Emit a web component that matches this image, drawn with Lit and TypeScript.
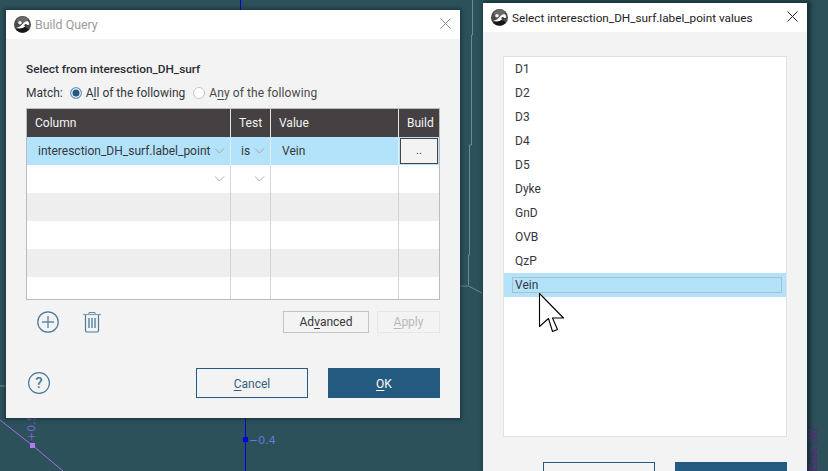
import { LitElement, html, css, svg } from "lit";
import { customElement } from "lit/decorators.js";

const logo = svg`<svg class="logo" width="17" height="17" viewBox="0 0 17 17"><circle cx="8.500" cy="8.500" r="8.500" fill="#4a4a4a"/><path d="M2.500 4A8.500 8.500 0 0 1 14.500 2.500L13 6L4 8z" fill="#6a6a6a"/><path d="M2 13.500A8.500 8.500 0 0 0 15 13.500L11 11L5 12z" fill="#161616"/><circle cx="6" cy="6.700" r="1.700" fill="#f4f4f4"/><path d="M2.200 11.500C4.500 11.800 6 10.500 7.500 9C9.300 7.200 11 4.800 14 5.300C15.200 6.500 15.500 8 15 9C13.500 8.500 12 9.500 10.500 10.800C8.500 12.500 5 13.200 2.200 11.500z" fill="#fbfbfb"/><circle cx="11.800" cy="9.200" r="1.300" fill="#3c3c3c"/></svg>`;
const chev = svg`<svg class="chev" width="11" height="6" viewBox="0 0 11 6"><path d="M1 .5l4.500 4.500L10 .5" fill="none" stroke="#a3a3a3" stroke-width="1"/></svg>`;
const closeIcon = (c: string) => svg`<svg class="x" width="11" height="11" viewBox="0 0 11 11"><path d="M.5.500l10 10M10.500.500l-10 10" stroke="${c}" stroke-width="1" fill="none"/></svg>`;

@customElement("app-root")
export class AppRoot extends LitElement {
  static styles = css`
    :host { display: block; position: relative; width: 828px; height: 471px; overflow: hidden; background: #2c515b;
      font-family: Roboto, "Liberation Sans", sans-serif; font-size: 12px; color: #36363c; }
    .bg { position: absolute; left: 0; top: 0; }
    .win { position: absolute; background: #f3f3f3; display: flex; flex-direction: column; box-shadow: 0 0 3px 2px rgba(20,40,45,.55); }
    .w1 { left: 6px; top: 10px; width: 454px; height: 408px; }
    .w2 { left: 483px; top: 3px; width: 324px; height: 490px; box-shadow: 2px 0 4px 2px rgba(10,25,30,.6); }
    .tb { height: 29px; flex: none; background: #fff; display: flex; align-items: center; gap: 3px; padding: 0 9px 0 8px; }
    .w1 .tb { color: #9b9b9b; font-size: 12.400px; }
    .w2 .tb { color: #222; font-size: 11.750px; }
    .tb .t { flex: 1; margin-left: 1px; }
    .x { margin-bottom: 3px; flex: none; }
    .logo { flex: none; }
    .body1 { padding: 21px 20px 20px; display: flex; flex-direction: column; flex: 1; }
    .h { font-weight: 500; font-size: 11.800px; color: #2c2c34; line-height: 18px; height: 18px; }
    .match { display: flex; align-items: center; height: 22px; margin-top: 4px; margin-bottom: 4px; }
    .radio { width: 12px; height: 12px; border-radius: 50%; border: 1px solid #c8c8c8; background: #fff; box-sizing: border-box; flex: none; }
    .radio.on { background: #245a80; box-shadow: inset 0 0 0 1.500px #e6eef4; border-color: #7fa3bd; }
    .m1 { margin: 0 4px 0 7px; }
    .m2 { margin: 0 4px 0 8px; }
    .t-any { color: #4a4a4a; letter-spacing: .1px; }
    u { text-underline-offset: 2px; }
    .table { border: 1px solid #bcbcbc; height: 190px; overflow: hidden; display: grid; grid-template-columns: 204px 40px 128px 40px; grid-auto-rows: 28px; background: #fff; flex: none; width: 412px; }
    .c { border-right: 1px solid #d4d4d4; display: flex; align-items: center; box-sizing: border-box; justify-content: space-between; }
    .c:nth-child(4n) { border-right: 0; }
    .hd { background: #454142; color: #f4f4f4; border-right-color: #e4e4e4; padding-left: 8px; }
    .sel { background: #b3e3fb; border-right-color: #e4eef2; }
    .alt { background: #eeeeee; }
    .p1 { padding: 0 4px 0 11px; }
    .p2 { padding: 0 4px 0 10px; }
    .p3 { padding-left: 11px; }
    .dots { width: 38px; height: 26px; margin: 0 auto; box-sizing: border-box; border: 1px solid #454545; background: #f3f3f3; display: flex; align-items: center; justify-content: center; font-size: 11px; line-height: 1; padding-bottom: 1px; color: #444; }
    .chev { margin-right: 1px; }
    .actions { display: flex; align-items: center; height: 22px; margin-top: 11px; }
    .ic { display: block; flex: none; }
    .ic1 { margin-left: 11px; }
    .ic2 { margin-left: 23px; }
    .sp { flex: 1; }
    .btn { box-sizing: border-box; display: flex; align-items: center; justify-content: center; flex: none; }
    .adv { width: 86px; height: 22px; border: 1px solid #c4c4c4; }
    .app { width: 63px; height: 22px; margin-left: 8px; border: 1px solid #e6e6e6; color: #b8b8b8; }
    .foot { display: flex; align-items: center; height: 30px; margin-top: 35px; }
    .foot .btn, .foot2 .btn { width: 112px; height: 30px; padding-top: 1px; }
    .cancel { border: 1px solid #245a80; color: #355f80; }
    .ok { background: #245a80; color: #fff; margin-left: 20px; }
    .help { margin-left: 1px; }
    .body2 { padding: 24px 20px 0; display: flex; flex-direction: column; flex: 1; }
    .list { height: 381px; background: #fff; border: 1px solid #e2e2e2; box-sizing: border-box; flex: none; position: relative; }
    .it { height: 24px; display: flex; align-items: center; padding-left: 11px; }
    .it.s { background: #b3e3fb; padding: 4px 4px 4px 8px; box-sizing: border-box; }
    .it.s span { flex: 1; height: 16px; line-height: 14px; border: 1px solid #aebfca; padding-left: 2px; box-sizing: border-box; }
    .cursor { position: absolute; left: 34px; top: 235px; }
    .foot2 { display: flex; justify-content: flex-end; margin-top: 25px; }
  `;

  render() {
    const items = ["D1", "D2", "D3", "D4", "D5", "Dyke", "GnD", "OVB", "QzP"];
    return html`
      <svg class="bg" width="828" height="471">
        <path d="M240.500 0v10M245.500 418v53" stroke="#0000e0" stroke-width="1"/>
        <path d="M0 420L32 445L63 471" stroke="#a070e8" stroke-width="1" fill="none"/>
        <path d="M0 386h6" stroke="#7a8f95"/>
        <path d="M472.500 0V35H471.500V145H469.500V255H468.500V285M460 286H468.500L482 293" stroke="#6f8a90" stroke-width="1" fill="none"/>
        <rect x="243" y="437" width="5" height="5" fill="#0000e0"/>
        <rect x="30" y="443" width="5" height="5" fill="#b07cf0"/>
        <text x="249" y="444" font-family="DejaVu Sans" font-size="11" fill="#6a78d8">−0.4</text>
        <text transform="translate(35,441) rotate(-90)" font-family="DejaVu Sans" font-size="11" fill="#7a68c8">+0.5</text>
      </svg>

      <div class="win w1">
        <div class="tb">${logo}<span class="t">Build Query</span>${closeIcon("#8f8f8f")}</div>
        <div class="body1">
          <div class="h">Select from interesction_DH_surf</div>
          <div class="match">
            <span>Match:</span>
            <span class="radio on m1"></span><span>A<u>l</u>l of the following</span>
            <span class="radio m2"></span><span class="t-any">A<u>n</u>y of the following</span>
          </div>
          <div class="table">
            <div class="c hd">Column</div><div class="c hd">Test</div><div class="c hd">Value</div><div class="c hd">Build</div>
            <div class="c sel p1">interesction_DH_surf.label_point${chev}</div>
            <div class="c sel p2">is${chev}</div>
            <div class="c sel p3">Vein</div>
            <div class="c sel"><span class="dots">..</span></div>
            <div class="c p1"><span></span>${chev}</div><div class="c p2"><span></span>${chev}</div><div class="c"></div><div class="c"></div>
            <div class="c alt"></div><div class="c alt"></div><div class="c alt"></div><div class="c alt"></div>
            <div class="c"></div><div class="c"></div><div class="c"></div><div class="c"></div>
            <div class="c alt"></div><div class="c alt"></div><div class="c alt"></div><div class="c alt"></div>
            <div class="c"></div><div class="c"></div><div class="c"></div><div class="c"></div>
          </div>
          <div class="actions">
            <svg class="ic ic1" width="22" height="22" viewBox="0 0 22 22"><circle cx="11" cy="11" r="10.200" fill="none" stroke="#4a7a9c" stroke-width="1.200"/><path d="M11 5v12M5 11h12" stroke="#5f8aa8" stroke-width="1.400"/></svg>
            <svg class="ic ic2" width="20" height="22" viewBox="0 0 20 22"><path d="M1 3.500h18" stroke="#7ea0b8" stroke-width="1.200"/><path d="M7 3V1.500h6V3" fill="none" stroke="#5f8aa8" stroke-width="1"/><path d="M3.500 4v15.500q0 1.500 1.500 1.500h10q1.500 0 1.500-1.500V4" fill="none" stroke="#4a7a9c" stroke-width="1.200"/><path d="M7 7v10M10 7v10M13 7v10" stroke="#4a7a9c" stroke-width="1.300"/></svg>
            <span class="sp"></span>
            <div class="btn adv"><span>Ad<u>v</u>anced</span></div>
            <div class="btn app"><span><u>A</u>pply</span></div>
          </div>
          <div class="foot">
            <svg class="ic help" width="24" height="24" viewBox="0 0 24 24"><circle cx="12" cy="12" r="10.400" fill="none" stroke="#4a7a9c" stroke-width="1.200"/><text x="12" y="17" text-anchor="middle" font-family="Roboto" font-size="15" font-weight="500" fill="#4a7a9c">?</text></svg>
            <span class="sp"></span>
            <div class="btn cancel"><span><u>C</u>ancel</span></div>
            <div class="btn ok"><span><u>O</u>K</span></div>
          </div>
        </div>
      </div>

      <div class="win w2">
        <div class="tb">${logo}<span class="t">Select interesction_DH_surf.label_point values</span>${closeIcon("#222")}</div>
        <div class="body2">
          <div class="list">
            ${items.map((i) => html`<div class="it">${i}</div>`)}
            <div class="it s"><span>Vein</span></div>
            <svg class="cursor" width="28" height="42" viewBox="0 0 28 42"><path d="M1.500 1.500V34.500L10.500 26.500L14.500 39.500L19.500 37.500L14.500 26H25.500Z" fill="#fff" stroke="#000" stroke-width="1.100" stroke-linejoin="round"/></svg>
          </div>
          <div class="foot2">
            <div class="btn cancel"></div>
            <div class="btn ok"></div>
          </div>
        </div>
      </div>

      <svg class="bg" width="828" height="471">
        <text transform="translate(817,471) rotate(-90)" font-family="DejaVu Sans" font-size="11" fill="#6a1a80">East (X)</text>
      </svg>
    `;
  }
}
